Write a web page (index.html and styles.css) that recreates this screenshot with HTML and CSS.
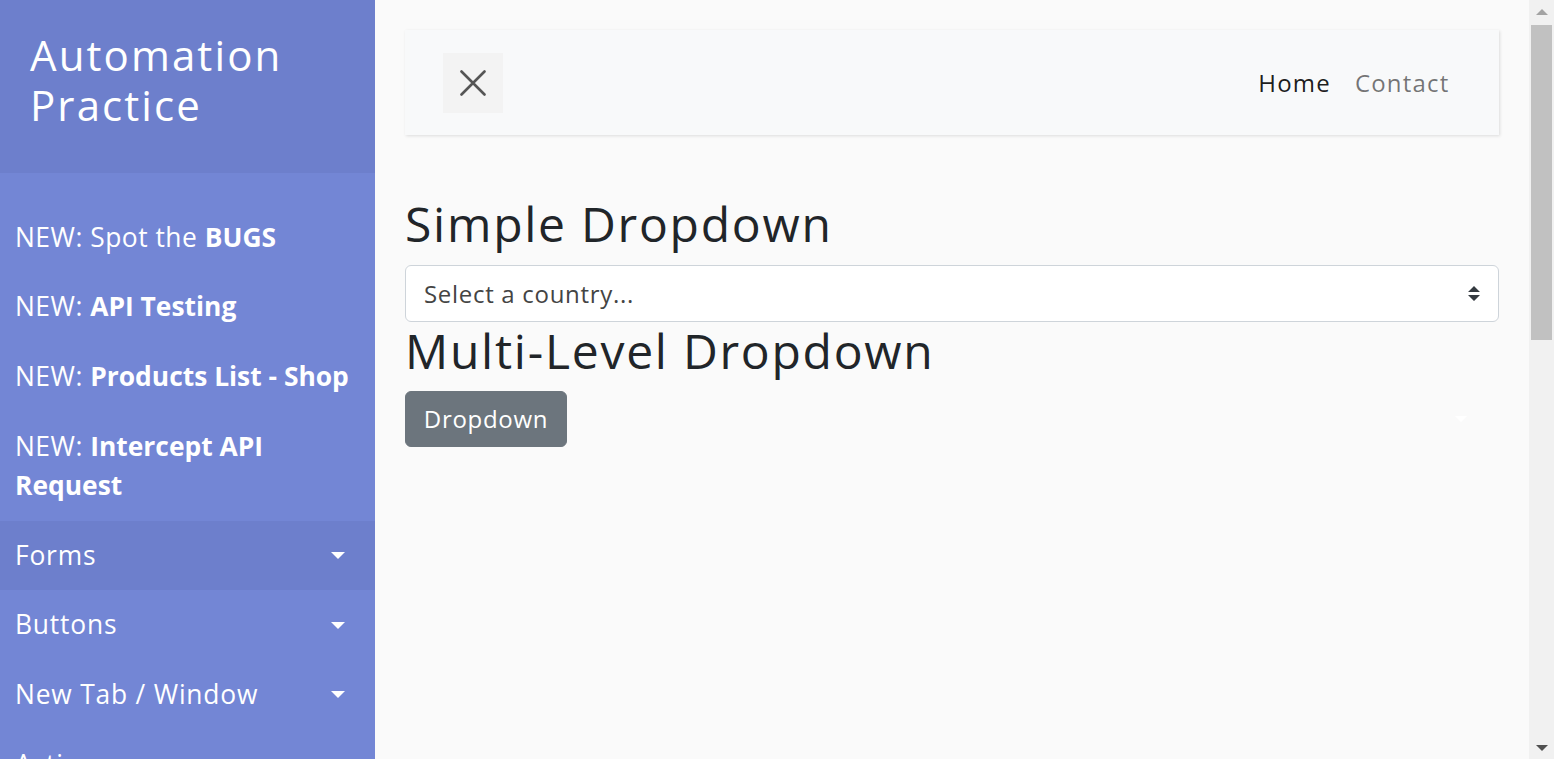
FILE: index.html
```html
<!DOCTYPE html>
<html lang="en">
<head>
<meta charset="utf-8">
<title>Automation Practice - Dropdowns</title>
<link rel="stylesheet" href="styles.css">
</head>
<body>
<div class="wrapper">
  <nav class="sidebar">
    <div class="sidebar-header">
      <h3 class="brand">Automation Practice</h3>
    </div>
    <ul class="menu">
      <li><a class="menu-link" href="#">NEW: Spot the <b>BUGS</b></a></li>
      <li><a class="menu-link" href="#">NEW: <b>API Testing</b></a></li>
      <li><a class="menu-link" href="#">NEW: <b>Products List - Shop</b></a></li>
      <li><a class="menu-link" href="#">NEW: <b>Intercept API Request</b></a></li>
      <li class="active"><a class="menu-link toggle-link" href="#">Forms<span class="caret"></span></a></li>
      <li><a class="menu-link toggle-link" href="#">Buttons<span class="caret"></span></a></li>
      <li><a class="menu-link toggle-link" href="#">New Tab / Window<span class="caret"></span></a></li>
      <li><a class="menu-link toggle-link" href="#">Actions<span class="caret"></span></a></li>
      <li><a class="menu-link toggle-link" href="#">Alerts &amp; Modals<span class="caret"></span></a></li>
      <li><a class="menu-link toggle-link" href="#">Iframes<span class="caret"></span></a></li>
      <li><a class="menu-link toggle-link" href="#">Tables<span class="caret"></span></a></li>
      <li><a class="menu-link toggle-link" href="#">Dropdowns<span class="caret"></span></a></li>
      <li><a class="menu-link toggle-link" href="#">Sliders<span class="caret"></span></a></li>
      <li><a class="menu-link toggle-link" href="#">Calendars<span class="caret"></span></a></li>
      <li><a class="menu-link toggle-link" href="#">Hover<span class="caret"></span></a></li>
      <li><a class="menu-link toggle-link" href="#">Spinners<span class="caret"></span></a></li>
      <li><a class="menu-link toggle-link" href="#">File Upload<span class="caret"></span></a></li>
      <li><a class="menu-link toggle-link" href="#">File Download<span class="caret"></span></a></li>
      <li><a class="menu-link toggle-link" href="#">Broken Links<span class="caret"></span></a></li>
      <li><a class="menu-link toggle-link" href="#">Accessibility<span class="caret"></span></a></li>
      <li><a class="menu-link toggle-link" href="#">Click Events<span class="caret"></span></a></li>
    </ul>
  </nav>

  <main class="content">
    <nav class="topbar">
      <button class="close-btn" type="button" aria-label="Toggle sidebar">
        <svg width="26" height="26" viewBox="0 0 26 26" aria-hidden="true">
          <path d="M1.5 1.5 L24.5 24.5 M24.5 1.5 L1.5 24.5" stroke="#555" stroke-width="2.6" stroke-linecap="round" fill="none"/>
        </svg>
      </button>
      <ul class="top-nav">
        <li><a class="top-link top-link-active" href="#">Home</a></li>
        <li><a class="top-link" href="#">Contact</a></li>
      </ul>
    </nav>

    <h2 class="section-title">Simple Dropdown</h2>
    <div class="select-box" role="combobox">
      <span class="select-text">Select a country...</span>
      <svg class="select-arrow" width="12" height="15" viewBox="0 0 4 5" aria-hidden="true">
        <path d="M2 0L0 2h4zm0 5L0 3h4z" fill="#343a40"/>
      </svg>
    </div>

    <h2 class="section-title">Multi-Level Dropdown</h2>
    <div class="dropdown">
      <button class="btn-dropdown" type="button">Dropdown</button>
      <span class="ghost-caret"></span>
    </div>
  </main>
</div>

<div class="scrollbar" aria-hidden="true">
  <div class="scroll-btn"><span class="arrow-up"></span></div>
  <div class="scroll-track"><div class="scroll-thumb"></div></div>
  <div class="scroll-btn"><span class="arrow-down"></span></div>
</div>
</body>
</html>
```

FILE: styles.css
```css
html {
  background: #fafafa;
}

body {
  margin: 0;
  padding-right: 25px;
  font-family: "Open Sans", "DejaVu Sans", sans-serif;
  color: #212529;
  background: #fafafa;
}

.wrapper {
  display: flex;
  align-items: stretch;
}

/* Sidebar */
.sidebar {
  flex: 0 0 375px;
  width: 375px;
  background: #7386d5;
  color: #fff;
}

.sidebar-header {
  background: #6d7fcc;
  padding: 30px;
}

.brand {
  margin: 0 0 12px;
  font-size: 42px;
  line-height: 50.4px;
  font-weight: 500;
  letter-spacing: 2.1px;
}

.menu {
  list-style: none;
  margin: 0;
  padding: 30px 0 0;
}

.menu li.active {
  background: #6d7fcc;
}

.menu-link {
  display: block;
  padding: 15px;
  color: #fff;
  text-decoration: none;
  font-size: 26.4px;
  line-height: 39.6px;
  font-weight: 400;
  letter-spacing: 0.5px;
}

.menu-link b {
  font-weight: 700;
  letter-spacing: 0;
}

.toggle-link {
  display: flex;
  align-items: center;
  justify-content: space-between;
  padding-right: 30px;
  letter-spacing: 0.8px;
}

.caret {
  width: 0;
  height: 0;
  border-left: 7px solid transparent;
  border-right: 7px solid transparent;
  border-top: 7px solid #fff;
}

/* Content */
.content {
  flex: 1;
  padding: 30px;
  min-height: 100vh;
  box-sizing: border-box;
}

.topbar {
  display: flex;
  align-items: center;
  justify-content: space-between;
  background: #f8f9fa;
  padding: 22.5px 37.5px;
  margin-bottom: 60px;
  box-shadow: 1px 1px 3px rgba(0, 0, 0, 0.12);
}

.close-btn {
  width: 60px;
  height: 60px;
  border: 0;
  padding: 0;
  background: #f3f3f3;
  display: flex;
  align-items: center;
  justify-content: center;
}

.top-nav {
  list-style: none;
  margin: 0;
  padding: 0;
  display: flex;
}

.top-link {
  display: block;
  padding: 12px;
  font-size: 24px;
  line-height: 36px;
  color: rgba(0, 0, 0, 0.55);
  text-decoration: none;
  font-weight: 400;
  letter-spacing: 1.2px;
}

.top-link-active {
  color: rgba(0, 0, 0, 0.9);
}

.section-title {
  margin: 0 0 12px;
  font-size: 48px;
  line-height: 57.6px;
  font-weight: 500;
  color: #212529;
  letter-spacing: 1.75px;
}

.select-box {
  display: flex;
  align-items: center;
  justify-content: space-between;
  height: 57px;
  box-sizing: border-box;
  border: 1px solid #ced4da;
  border-radius: 6px;
  background: #fff;
  padding: 0 18px;
}

.select-text {
  font-size: 24px;
  color: #444;
  letter-spacing: 0.7px;
}

.dropdown {
  position: relative;
}

.btn-dropdown {
  font-family: inherit;
  font-size: 24px;
  line-height: 36px;
  letter-spacing: 0.7px;
  color: #fff;
  background: #6c757d;
  border: 1px solid #6c757d;
  border-radius: 6px;
  padding: 9px 12px;
  width: 162px;
  height: 56px;
}

.ghost-caret {
  position: absolute;
  right: 32px;
  top: 25px;
  width: 0;
  height: 0;
  border-left: 6px solid transparent;
  border-right: 6px solid transparent;
  border-top: 6px solid #fff;
}

/* Simulated browser scrollbar */
.scrollbar {
  position: fixed;
  top: 0;
  right: 0;
  width: 25px;
  height: 100vh;
  background: #f1f1f1;
  display: flex;
  flex-direction: column;
}

.scroll-btn {
  flex: 0 0 25px;
  display: flex;
  align-items: center;
  justify-content: center;
}

.scroll-track {
  flex: 1;
  padding: 0 2px;
}

.scroll-thumb {
  height: 315px;
  background: #c1c1c1;
}

.arrow-up {
  width: 0;
  height: 0;
  border-left: 6px solid transparent;
  border-right: 6px solid transparent;
  border-bottom: 6px solid #a3a3a3;
  margin-top: -1px;
}

.arrow-down {
  width: 0;
  height: 0;
  border-left: 6px solid transparent;
  border-right: 6px solid transparent;
  border-top: 6px solid #505050;
  margin-top: 2px;
}
```
